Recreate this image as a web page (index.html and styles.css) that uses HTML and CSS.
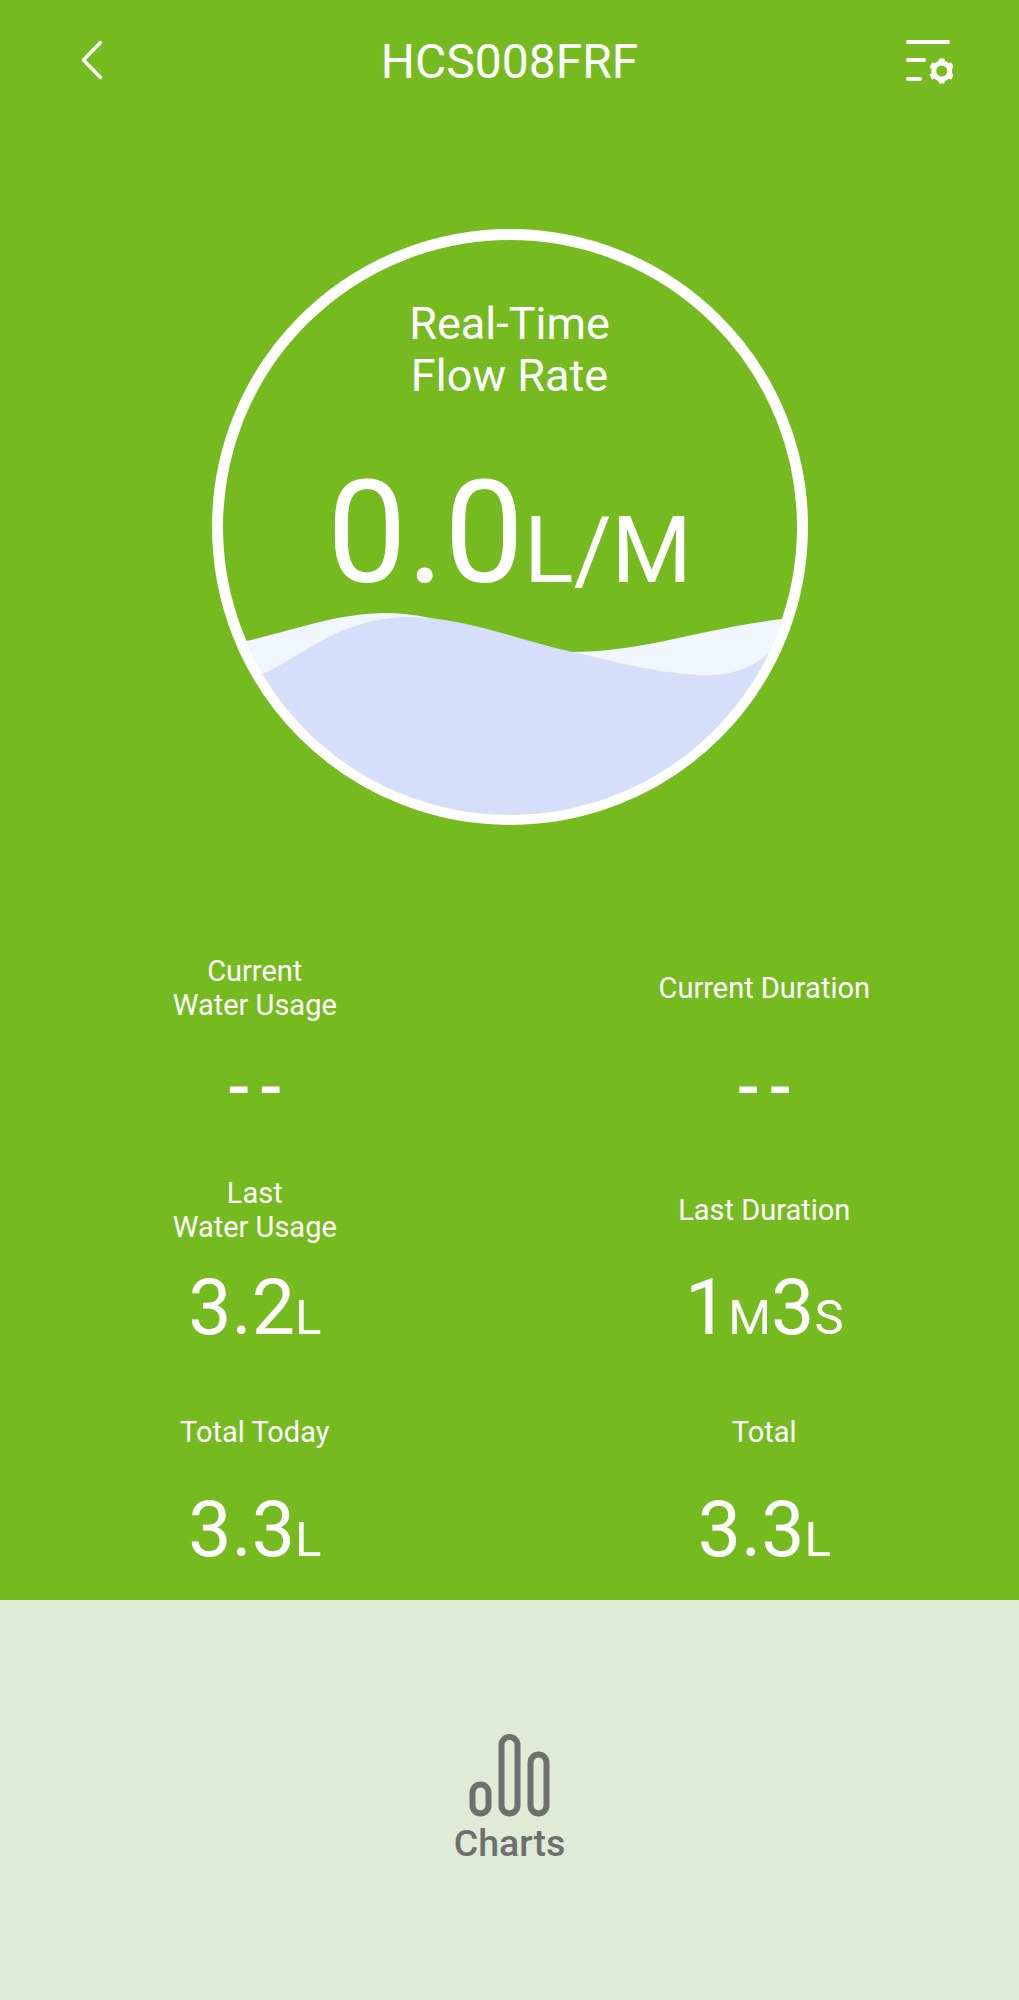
FILE: index.html
```html
<!DOCTYPE html>
<html lang="en">
<head>
<meta charset="utf-8">
<title>HCS008FRF</title>
<link rel="stylesheet" href="styles.css">
</head>
<body>
<div class="page">
  <main class="main">
    <header class="header">
      <div class="side side-left">
        <svg class="back" viewBox="0 0 24 44" aria-hidden="true"><path d="M20.5 3.5 L3.5 21 L20.5 38.5" /></svg>
      </div>
      <h1 class="title">HCS008FRF</h1>
      <div class="side side-right">
        <svg class="settings" viewBox="0 0 50 48" aria-hidden="true">
          <g class="lines">
            <path d="M5 4 H45" />
            <path d="M5 22 H21" />
            <path d="M5 41 H17" />
          </g>
          <g class="gear" transform="translate(38.7 33)">
            <circle r="8" />
            <rect x="-3" y="-12.5" width="6" height="6" rx="1"/>
            <rect x="-3" y="-12.5" width="6" height="6" rx="1" transform="rotate(60)"/>
            <rect x="-3" y="-12.5" width="6" height="6" rx="1" transform="rotate(120)"/>
            <rect x="-3" y="-12.5" width="6" height="6" rx="1" transform="rotate(180)"/>
            <rect x="-3" y="-12.5" width="6" height="6" rx="1" transform="rotate(240)"/>
            <rect x="-3" y="-12.5" width="6" height="6" rx="1" transform="rotate(300)"/>
          </g>
        </svg>
      </div>
    </header>

    <section class="gauge">
      <svg class="water" viewBox="0 0 596 596" aria-hidden="true">
        <defs><clipPath id="inner"><circle cx="298" cy="298" r="288"/></clipPath></defs>
        <g clip-path="url(#inner)">
          <path class="wave-light" d="M0 420 L34 412 C80 402 125 384 174 384 C240 384 300 423 356 423 C440 423 490 397 590 388 V596 H0Z"/>
          <path class="wave-dark" d="M30 455 L51 445 C90 427 130 388 197 388 C250 388 300 409 360 423 C420 437 460 446 494 446 C525 446 545 438 572 410 V596 H30Z"/>
        </g>
      </svg>
      <div class="gauge-label">Real-Time<br>Flow Rate</div>
      <div class="gauge-value">0.0<span class="gauge-unit">L/M</span></div>
    </section>

    <section class="stats">
      <div class="stat">
        <div class="stat-label">Current<br>Water Usage</div>
        <div class="stat-value stat-empty">- -</div>
      </div>
      <div class="stat">
        <div class="stat-label">Current Duration</div>
        <div class="stat-value stat-empty">- -</div>
      </div>
      <div class="stat">
        <div class="stat-label">Last<br>Water Usage</div>
        <div class="stat-value">3.2<span class="unit">L</span></div>
      </div>
      <div class="stat">
        <div class="stat-label">Last Duration</div>
        <div class="stat-value">1<span class="unit">M</span>3<span class="unit">S</span></div>
      </div>
      <div class="stat">
        <div class="stat-label">Total Today</div>
        <div class="stat-value">3.3<span class="unit">L</span></div>
      </div>
      <div class="stat">
        <div class="stat-label">Total</div>
        <div class="stat-value">3.3<span class="unit">L</span></div>
      </div>
    </section>
  </main>

  <footer class="footer">
    <svg class="charts-icon" viewBox="0 0 84 85" aria-hidden="true">
      <rect x="4.5" y="51.5" width="16" height="29" rx="8"/>
      <rect x="33.5" y="4" width="16" height="76.5" rx="8"/>
      <rect x="62.5" y="21.5" width="16" height="59" rx="8"/>
    </svg>
    <div class="charts-label">Charts</div>
  </footer>
</div>
</body>
</html>
```

FILE: styles.css
```css
* {
  box-sizing: border-box;
}

html,
body {
  margin: 0;
  padding: 0;
}

body {
  font-family: Roboto, "Liberation Sans", sans-serif;
  color: #fff;
  background: #e1ead6;
}

.page {
  width: 1019px;
  height: 2000px;
  display: flex;
  flex-direction: column;
  overflow: hidden;
}

.main {
  height: 1600px;
  background: #75bb20;
  display: flex;
  flex-direction: column;
  align-items: center;
}

.header {
  width: 100%;
  height: 124px;
  display: grid;
  grid-template-columns: 1fr auto 1fr;
  align-items: center;
}

.side {
  display: flex;
  align-items: center;
}

.side-left {
  padding-left: 80px;
  padding-bottom: 3px;
}

.side-right {
  justify-content: flex-end;
  padding-right: 66px;
}

.back {
  width: 24px;
  height: 44px;
  fill: none;
  stroke: #fff;
  stroke-width: 3.4;
  stroke-linecap: round;
  stroke-linejoin: round;
}

.settings {
  width: 50px;
  height: 48px;
}

.lines {
  fill: none;
  stroke: #fff;
  stroke-width: 4;
  stroke-linecap: round;
}

.gear circle {
  fill: none;
  stroke: #fff;
  stroke-width: 5;
}

.gear rect {
  fill: #fff;
}

.title {
  margin: 0;
  font-size: 48px;
  font-weight: 400;
  line-height: 56px;
}

.gauge {
  position: relative;
  width: 596px;
  height: 596px;
  margin-top: 105px;
  border-radius: 50%;
  border: 11px solid #fff;
  background: #75bb20;
  display: flex;
  flex-direction: column;
  align-items: center;
  flex: none;
}

.water {
  position: absolute;
  left: -11px;
  top: -11px;
  width: 596px;
  height: 596px;
}

.wave-light {
  fill: #f2f6fe;
}

.wave-dark {
  fill: #d6dffa;
}

.gauge-label {
  position: relative;
  margin-top: 58px;
  font-size: 45px;
  line-height: 52px;
  text-align: center;
}

.gauge-value {
  position: relative;
  margin-top: 57px;
  font-size: 142px;
  line-height: 150px;
  white-space: nowrap;
}

.gauge-unit {
  font-size: 92px;
  line-height: 1;
}

.stats {
  width: 100%;
  margin-top: 128px;
  display: grid;
  grid-template-columns: 1fr 1fr;
  row-gap: 44px;
}

.stat {
  display: flex;
  flex-direction: column;
  align-items: center;
  text-align: center;
}

.stat-label {
  height: 68px;
  padding-top: 1px;
  display: flex;
  align-items: center;
  justify-content: center;
  font-size: 29px;
  line-height: 34px;
}

.stat-value {
  margin-top: 20px;
  height: 90px;
  font-size: 77px;
  line-height: 90px;
  white-space: nowrap;
}

.stat-empty {
  font-size: 68px;
  font-weight: 500;
  line-height: 94px;
  word-spacing: -8px;
}

.unit {
  font-size: 49px;
  line-height: 1;
}

.footer {
  flex: 1;
  background: #e1ead6;
  display: flex;
  flex-direction: column;
  align-items: center;
  padding-top: 133px;
}

.charts-icon {
  width: 84px;
  height: 85px;
  fill: none;
  stroke: #6d706c;
  stroke-width: 6;
}

.charts-label {
  margin-top: 4px;
  font-size: 37.5px;
  font-weight: 500;
  line-height: 42px;
  color: #6d706c;
}
```
